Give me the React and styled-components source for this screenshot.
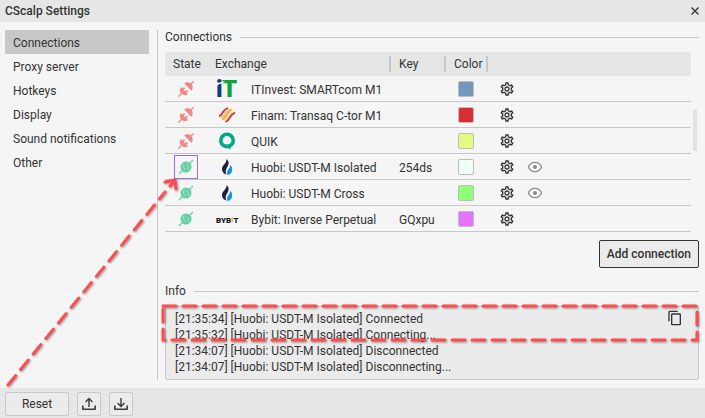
import { useState } from "react";
import styled, { createGlobalStyle } from "styled-components";
import { MdContentCopy, MdOutlineSettings } from "react-icons/md";

const menu = [
  "Connections",
  "Proxy server",
  "Hotkeys",
  "Display",
  "Sound notifications",
  "Other",
];

const connections = [
  { id: 1, logo: "it", name: "ITInvest: SMARTcom M1", color: "#7397bd" },
  { id: 2, logo: "finam", name: "Finam: Transaq C-tor M1", color: "#d82f37" },
  { id: 3, logo: "quik", name: "QUIK", color: "#e4fb82" },
  {
    id: 4,
    logo: "huobi",
    name: "Huobi: USDT-M Isolated",
    key: "254ds",
    color: "#effff2",
    online: true,
    visible: true,
    selected: true,
  },
  {
    id: 5,
    logo: "huobi",
    name: "Huobi: USDT-M Cross",
    color: "#8eff78",
    online: true,
    visible: true,
  },
  {
    id: 6,
    logo: "bybit",
    name: "Bybit: Inverse Perpetual",
    key: "GQxpu",
    color: "#e573ff",
    online: true,
  },
];

const log = [
  "[21:35:34] [Huobi: USDT-M Isolated] Connected",
  "[21:35:32] [Huobi: USDT-M Isolated] Connecting...",
  "[21:34:07] [Huobi: USDT-M Isolated] Disconnected",
  "[21:34:07] [Huobi: USDT-M Isolated] Disconnecting...",
];

const PlugIcon = ({ online }) =>
  online ? (
    <svg width="16" height="16" viewBox="0 0 16 16" fill="#66cfa5">
      <path d="M1 15 15 1" stroke="#66cfa5" strokeWidth="1.2" />
      <circle cx="8" cy="8" r="5.5" />
      <path
        d="M3.8 4.6 6 6.4 5.4 8.6 7.6 10.8M8.4 5.4 10.4 7.4 10 9.8 12 11.6"
        stroke="#b9ead6"
        strokeWidth="0.8"
        fill="none"
      />
    </svg>
  ) : (
    <svg width="16" height="16" viewBox="0 0 16 16" fill="#f08784">
      <path d="M0.4 15.6 4 12M12 4 15.6 0.4" stroke="#f08784" strokeWidth="1.3" />
      <path d="M3 6 10 13A5 5 0 0 1 3 6Z" />
      <path d="M6.2 2.6 13.4 9.8A5.1 5.1 0 0 0 6.2 2.6Z" />
      <path d="M4.6 8.6 6.6 6.6M7.4 11.4 9.4 9.4" stroke="#f08784" strokeWidth="1.8" />
    </svg>
  );

const logos = {
  it: (
    <svg width="24" height="20" viewBox="0 0 24 20" overflow="visible">
      <text x="1" y="18" fontFamily="Roboto" fontWeight="900" fontSize="24" fill="#0d3f86">
        i
      </text>
      <text x="7" y="18" fontFamily="Roboto" fontWeight="900" fontSize="24" fill="#0aa53e">
        T
      </text>
      <path d="M1 7.2C3 4.6 6 3.2 9.5 2.6" stroke="#f5f5f5" strokeWidth="1.2" fill="none" />
    </svg>
  ),
  finam: (
    <svg width="24" height="20" viewBox="0 0 24 20" fill="none">
      <path d="M4 11C8 10.5 7 4.5 13 3" stroke="#c9363c" strokeWidth="1.8" />
      <path d="M5.5 12.4C10 11.5 9 6 14.5 4.4" stroke="#f3b59a" strokeWidth="1.6" />
      <path d="M7 14.4C12 13 11 7 16.5 4.4" stroke="#f2b632" strokeWidth="2.4" />
      <path d="M9 15.4C13.5 14 13 9 18 6.4" stroke="#f6cfa6" strokeWidth="1.4" />
      <path d="M10.4 17C15 15.6 14 10 20 7.6" stroke="#c9363c" strokeWidth="1.8" />
    </svg>
  ),
  quik: (
    <svg width="24" height="20" viewBox="0 0 24 20" fill="none">
      <circle cx="12" cy="9.4" r="6.2" stroke="#00a886" strokeWidth="3.6" />
      <path d="M10 13.4H15.4V19Z" fill="#00a886" />
    </svg>
  ),
  huobi: (
    <svg width="24" height="20" viewBox="0 0 24 20">
      <path
        d="M11.6 2C15 5 13.4 8.2 12 10.6 10.8 12.8 10.2 15 11.2 17.6 8.6 16.8 7 14.6 7 11.8 7 8 11.8 6.6 11.6 2Z"
        fill="#1b2143"
      />
      <path
        d="M15.2 7.6C17.6 10 17.6 13 16.6 15.2 15.6 17 14 18 12.4 18 11.4 14.8 12.6 13.2 14 11.4 15 10.2 15.4 9 15.2 7.6Z"
        fill="#0f92e0"
      />
    </svg>
  ),
  bybit: (
    <svg width="24" height="20" viewBox="0 0 24 20" overflow="visible">
      <text x="1" y="14" fontFamily="Roboto" fontWeight="900" fontSize="8" fill="#15192a">
        BYB
        <tspan fill="#f7b22c" dy="-1">
          I
        </tspan>
        <tspan dy="1">T</tspan>
      </text>
    </svg>
  ),
};

const EyeIcon = () => (
  <svg width="16" height="12" viewBox="0 0 16 12" fill="none">
    <path
      d="M1.4 6C2.8 2.8 5.2 1.4 8 1.4S13.2 2.8 14.6 6C13.2 9.2 10.8 10.6 8 10.6S2.8 9.2 1.4 6Z"
      stroke="#8c8c8c"
      strokeWidth="1.3"
    />
    <circle cx="8" cy="6" r="2" fill="#8c8c8c" />
  </svg>
);

const TransferIcon = ({ up }) => (
  <svg width="16" height="14" viewBox="0 0 16 14" fill="none" stroke="#3c3c3c">
    <path d="M1.8 8.5V12.2H14.2V8.5" strokeWidth="1.6" strokeLinejoin="round" />
    <path d={up ? "M8 10V2M4.6 5 8 1.6 11.4 5" : "M8 1V9M4.6 6 8 9.4 11.4 6"} strokeWidth="1.4" />
  </svg>
);

const Group = ({ title, children }) => (
  <section>
    <GroupTitle>{title}</GroupTitle>
    {children}
  </section>
);

const App = () => {
  const [active, setActive] = useState("Connections");

  return (
    <Window>
      <GlobalStyle />
      <TitleBar>
        <h1>CScalp Settings</h1>
        <IconButton aria-label="Close">
          <svg width="8" height="8" viewBox="0 0 8 8" stroke="#333" strokeWidth="1.4">
            <path d="M0.5 0.5 7.5 7.5M7.5 0.5 0.5 7.5" />
          </svg>
        </IconButton>
      </TitleBar>

      <Body>
        <Sidebar>
          {menu.map((item) => (
            <MenuItem key={item} $active={item === active} onClick={() => setActive(item)}>
              {item}
            </MenuItem>
          ))}
        </Sidebar>

        <Content>
          <Group title="Connections">
            <TableArea>
              <Table>
                <thead>
                  <tr>
                    <HeadCell $width="42px">State</HeadCell>
                    <HeadCell $width="184px" $divider>
                      Exchange
                    </HeadCell>
                    <HeadCell $width="55px" $divider>
                      Key
                    </HeadCell>
                    <HeadCell $width="42px" $divider>
                      Color
                    </HeadCell>
                    <HeadCell />
                  </tr>
                </thead>
                <tbody>
                  {connections.map((c) => (
                    <tr key={c.id}>
                      <Cell $flush>
                        <StateButton
                          $selected={c.selected}
                          aria-label={c.online ? "Disconnect" : "Connect"}
                        >
                          <PlugIcon online={c.online} />
                        </StateButton>
                      </Cell>
                      <Cell>
                        <Exchange>
                          {logos[c.logo]}
                          <Label>{c.name}</Label>
                        </Exchange>
                      </Cell>
                      <Cell>
                        <Label>{c.key}</Label>
                      </Cell>
                      <Cell>
                        <Swatch $color={c.color} aria-label="Color" />
                      </Cell>
                      <Cell>
                        <Actions>
                          <IconButton aria-label="Connection settings">
                            <MdOutlineSettings size={16} />
                          </IconButton>
                          {c.visible && (
                            <IconButton aria-label="Show">
                              <EyeIcon />
                            </IconButton>
                          )}
                        </Actions>
                      </Cell>
                    </tr>
                  ))}
                </tbody>
              </Table>
              <ScrollThumb />
            </TableArea>
            <ButtonRow>
              <AddButton>Add connection</AddButton>
            </ButtonRow>
          </Group>

          <Group title="Info">
            <LogBox>
              <ul>
                {log.map((line) => (
                  <li key={line}>{line}</li>
                ))}
              </ul>
              <CopyButton aria-label="Copy">
                <MdContentCopy size={16} />
              </CopyButton>
              <Highlight>
                <rect x="2" y="2" width="100%" height="34" />
              </Highlight>
            </LogBox>
          </Group>
        </Content>

        <Arrow width="190" height="220" viewBox="0 0 190 220">
          <path d="M8 207 165 14" strokeDasharray="12 8" />
          <path d="M165 4 175 2 176 11M175 2 170 8" strokeLinejoin="round" />
        </Arrow>
      </Body>

      <Footer>
        <Button $width="64px">Reset</Button>
        <Button $width="24px" aria-label="Export settings">
          <TransferIcon up />
        </Button>
        <Button $width="24px" aria-label="Import settings">
          <TransferIcon />
        </Button>
      </Footer>
    </Window>
  );
};

const GlobalStyle = createGlobalStyle`
  * {
    box-sizing: border-box;
  }

  body {
    margin: 0;
    background: #f5f5f5;
    color: #333;
    font-family: Roboto, "Liberation Sans", sans-serif;
    font-size: 12px;
  }

  button {
    padding: 0;
    font: inherit;
    color: inherit;
    cursor: pointer;
  }

  svg {
    display: block;
    flex: none;
  }
`;

const Window = styled.div`
  min-height: 100vh;
  display: flex;
  flex-direction: column;
`;

const TitleBar = styled.header`
  height: 22px;
  padding: 0 6px 0 5px;
  display: flex;
  align-items: center;
  justify-content: space-between;
  background: #e6e6e6;

  h1 {
    margin: 0;
    font-size: 12px;
    font-weight: 500;
  }
`;

const Body = styled.div`
  position: relative;
  flex: 1;
  display: flex;
  padding: 8px 6px 8px 5px;
`;

const Sidebar = styled.nav`
  width: 153px;
  padding-right: 8px;
  border-right: 1px solid #c8c8c8;
`;

const MenuItem = styled.button`
  display: block;
  width: 100%;
  height: 24px;
  padding: 2px 8px 0;
  border: none;
  text-align: left;
  background: ${(p) => (p.$active ? "#c8c8c8" : "transparent")};
`;

const Content = styled.main`
  flex: 1;
  min-width: 0;
  padding-left: 7px;
`;

const GroupTitle = styled.h2`
  display: flex;
  align-items: center;
  gap: 8px;
  height: 14px;
  margin: 0 0 8px;
  font-size: 12px;
  font-weight: 400;

  &::after {
    content: "";
    flex: 1;
    height: 1px;
    background: #c8c8c8;
  }
`;

const TableArea = styled.div`
  position: relative;
  padding-right: 8px;
`;

const Table = styled.table`
  width: 100%;
  table-layout: fixed;
  border-spacing: 0;
`;

const HeadCell = styled.th`
  width: ${(p) => p.$width || "auto"};
  height: 24px;
  padding: 0 0 0 8px;
  text-align: left;
  font-weight: 400;
  background: #e6e6e6
    ${(p) => p.$divider && "linear-gradient(#c8c8c8, #c8c8c8) right / 2px 16px no-repeat"};
`;

const Cell = styled.td`
  height: 26px;
  padding: ${(p) => (p.$flush ? "0 0 0 9px" : "0 0 0 8px")};
  border-bottom: 1px solid #c8c8c8;
  white-space: nowrap;
`;

const Label = styled.span`
  display: block;
  padding-top: 2px;
`;

const StateButton = styled.button`
  display: flex;
  align-items: center;
  justify-content: center;
  width: 24px;
  height: 24px;
  background: none;
  border: 1px solid ${(p) => (p.$selected ? "#9b6bf2" : "transparent")};
`;

const Exchange = styled.div`
  display: flex;
  align-items: center;
  gap: 12px;
`;

const Swatch = styled.button`
  display: block;
  width: 16px;
  height: 16px;
  margin-left: 4px;
  border: 1px solid #bdbdbd;
  border-radius: 2px;
  background: ${(p) => p.$color};
`;

const Actions = styled.div`
  display: flex;
  align-items: center;
  gap: 12px;
  padding-left: 3px;
`;

const IconButton = styled.button`
  display: flex;
  border: none;
  background: none;
`;

const ScrollThumb = styled.div`
  position: absolute;
  top: 58px;
  right: 2px;
  width: 4px;
  height: 41px;
  background: #e2e2e2;
`;

const ButtonRow = styled.div`
  display: flex;
  justify-content: flex-end;
  padding: 8px 0 16px;
`;

const Button = styled.button`
  display: flex;
  align-items: center;
  justify-content: center;
  width: ${(p) => p.$width};
  height: 24px;
  border: 1px solid #c8c8c8;
  border-radius: 2px;
  background: #ebebeb;
`;

const AddButton = styled(Button)`
  height: 28px;
  padding: 0 7px;
  border-color: #333;
  font-weight: 500;
`;

const LogBox = styled.div`
  position: relative;
  height: 74px;
  padding: 4px 9px;
  border: 1px solid #c8c8c8;
  border-radius: 2px;
  background: #ebebeb;

  ul {
    margin: 0;
    padding: 0;
    list-style: none;
  }

  li {
    line-height: 16px;
  }
`;

const CopyButton = styled(IconButton)`
  position: absolute;
  top: 3px;
  right: 15px;
`;

// dashed marker round the two latest log lines
const Highlight = styled.svg`
  position: absolute;
  top: -3px;
  left: -5px;
  width: calc(100% + 2px);
  height: 40px;
  overflow: visible;
  pointer-events: none;
  filter: drop-shadow(1px 1px 1px rgba(0, 0, 0, 0.4));

  rect {
    fill: none;
    stroke: #ff4d4d;
    stroke-width: 3px;
    stroke-linecap: round;
    stroke-dasharray: 13 7;
  }
`;

const Arrow = styled.svg`
  position: absolute;
  left: 0;
  bottom: -10px;
  pointer-events: none;
  filter: drop-shadow(1px 1px 1px rgba(0, 0, 0, 0.4));

  path {
    fill: none;
    stroke: #ff4d4d;
    stroke-width: 3px;
    stroke-linecap: round;
  }
`;

const Footer = styled.footer`
  display: flex;
  gap: 8px;
  padding: 4px 5px 2px;
  background: #e6e6e6;
`;

export default App;
